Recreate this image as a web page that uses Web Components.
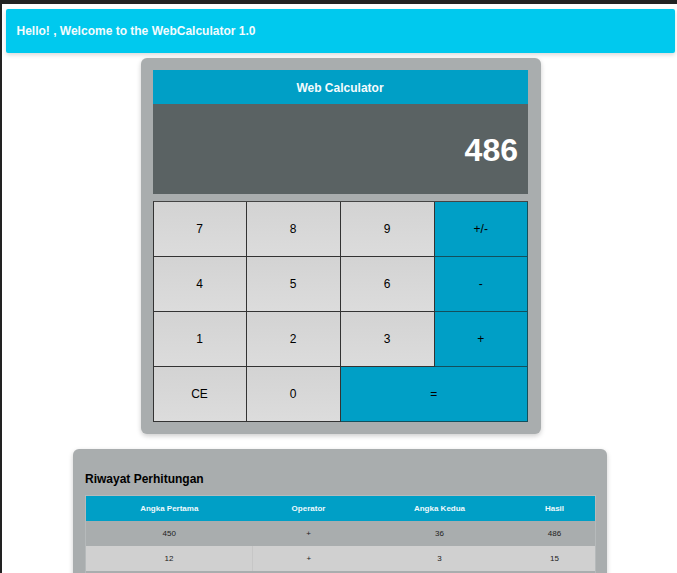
<!DOCTYPE html>
<html lang="id">
<head>
<meta charset="utf-8">
<title>WebCalculator</title>
<style>
  html { height: 100%; overflow: hidden; }
  body {
    margin: 0;
    height: 100%;
    overflow: hidden;
    background: #fff;
    border-top: 4px solid #222;
    border-left: 2px solid #222;
    box-sizing: border-box;
    font-family: 'Liberation Sans', Arial, sans-serif;
  }
</style>
</head>
<body>
<web-calc-app>
  <app-banner>Hello! , Welcome to the WebCalculator 1.0</app-banner>
  <calc-card title-text="Web Calculator" value="486"></calc-card>
  <history-card heading="Riwayat Perhitungan"></history-card>
</web-calc-app>

<script>
// Layout of the whole page
customElements.define('web-calc-app', class extends HTMLElement {
  constructor () {
    super()
    this.attachShadow({ mode: 'open' }).innerHTML = `
      <style>
        :host { display: flex; flex-direction: column; align-items: center; padding: 5px 2px 0 4px; }
      </style>
      <slot></slot>
    `
  }
})

customElements.define('app-banner', class extends HTMLElement {
  constructor () {
    super()
    this.attachShadow({ mode: 'open' }).innerHTML = `
      <style>
        :host {
          display: flex;
          align-items: center;
          align-self: stretch;
          height: 44px;
          padding: 0 10.5px;
          background: #00c9ee;
          color: #f4fbfd;
          font-size: 12px;
          font-weight: bold;
          border-radius: 2px;
          box-shadow: 0 2px 4px rgba(0, 0, 0, 0.15);
        }
      </style>
      <slot></slot>
    `
  }
})

customElements.define('calc-key', class extends HTMLElement {
  constructor () {
    super()
    this.attachShadow({ mode: 'open' }).innerHTML = `
      <style>
        :host {
          display: flex;
          align-items: center;
          justify-content: center;
          background: linear-gradient(#d3d3d3, #dcdcdc);
          color: #000;
          font-size: 12px;
          border-right: 1px solid #333;
          border-bottom: 1px solid #333;
          box-sizing: border-box;
        }
        :host([accent]) { background: #009fc6; border-color: #134f5c; padding-left: 0.5px; }
        :host([wide]) { grid-column: span 2; }
      </style>
      <slot></slot>
    `
  }
})

customElements.define('calc-keys', class extends HTMLElement {
  constructor () {
    super()
    this.attachShadow({ mode: 'open' }).innerHTML = `
      <style>
        :host {
          display: grid;
          grid-template-columns: 93px 94px 94px 93px;
          grid-auto-rows: 55px;
          border-top: 1px solid #444;
          border-left: 1px solid #333;
          margin-top: 7px;
        }
      </style>
      <slot></slot>
    `
  }
})

customElements.define('calc-card', class extends HTMLElement {
  constructor () {
    super()
    const keys = [['7'], ['8'], ['9'], ['+/-', 'accent'], ['4'], ['5'], ['6'], ['-', 'accent'],
      ['1'], ['2'], ['3'], ['+', 'accent'], ['CE'], ['0'], ['=', 'accent wide']]
    const keyMarkup = keys.map(([label, attrs = '']) => `<calc-key ${attrs}>${label}</calc-key>`).join('')
    this.attachShadow({ mode: 'open' }).innerHTML = `
      <style>
        :host {
          display: block;
          width: 400px;
          box-sizing: border-box;
          margin-top: 5px;
          padding: 12px 13px 12px 12px;
          background: #a9adae;
          border-radius: 6px;
          box-shadow: 0 2px 5px rgba(0, 0, 0, 0.2);
        }
        .title {
          display: flex;
          align-items: center;
          justify-content: center;
          height: 34px;
          padding-top: 2px;
          box-sizing: border-box;
          background: #009fc6;
          color: #f4fbfd;
          font-size: 12px;
          font-weight: bold;
        }
        .screen {
          display: flex;
          align-items: center;
          justify-content: flex-end;
          height: 90px;
          padding: 2px 9.5px 0 0;
          box-sizing: border-box;
          background: #5a6263;
          color: #fff;
          font-size: 32px;
          font-weight: bold;
        }
      </style>
      <div class="title">${this.getAttribute('title-text')}</div>
      <div class="screen">${this.getAttribute('value')}</div>
      <calc-keys>${keyMarkup}</calc-keys>
    `
  }
})

customElements.define('history-card', class extends HTMLElement {
  constructor () {
    super()
    const rows = [['450', '+', '36', '486'], ['12', '+', '3', '15'], ['\u00a0', '', '', '']]
    const body = rows.map(cells => `<tr>${cells.map(c => `<td>${c}</td>`).join('')}</tr>`).join('')
    this.attachShadow({ mode: 'open' }).innerHTML = `
      <style>
        :host {
          display: block;
          width: 534px;
          box-sizing: border-box;
          margin: 15px 1px 0 0;
          padding: 23px 12px 12px;
          background: #a9adae;
          border-radius: 6px;
          box-shadow: 0 2px 5px rgba(0, 0, 0, 0.2);
        }
        h2 {
          margin: 0 0 9px;
          font-size: 12px;
          line-height: 14px;
          font-weight: bold;
          color: #000;
        }
        table {
          width: 509.5px;
          table-layout: fixed;
          border-collapse: collapse;
          font-size: 8px;
          border: 1px solid #b6babb;
          border-bottom: 0;
        }
        th, td { height: 25px; padding: 0; text-align: center; }
        th { background: #009fc6; color: #eef9fc; font-weight: bold; }
        td { color: #222; }
        tbody tr:nth-child(even) td { background: #d0d0d0; }
        tbody tr:nth-child(odd) td { background: #a9adae; }
        tbody tr:nth-child(even) td:first-child { border-right: 1px solid #c6c6c6; }
      </style>
      <h2>${this.getAttribute('heading')}</h2>
      <table>
        <colgroup><col style="width:167px"><col style="width:112px"><col style="width:150px"><col style="width:80.5px"></colgroup>
        <thead><tr><th>Angka Pertama</th><th>Operator</th><th>Angka Kedua</th><th>Hasil</th></tr></thead>
        <tbody>${body}</tbody>
      </table>
    `
  }
})
</script>
</body>
</html>
